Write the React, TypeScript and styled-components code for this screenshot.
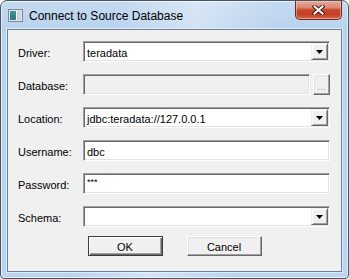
import React from 'react';
import styled, { createGlobalStyle } from 'styled-components';

type Row =
  | { kind: 'combo'; label: string; value: string }
  | { kind: 'text'; label: string; value: string; masked?: boolean }
  | { kind: 'browse'; label: string };

const rows: Row[] = [
  { kind: 'combo', label: 'Driver:', value: 'teradata' },
  { kind: 'browse', label: 'Database:' },
  { kind: 'combo', label: 'Location:', value: 'jdbc:teradata://127.0.0.1' },
  { kind: 'text', label: 'Username:', value: 'dbc' },
  { kind: 'text', label: 'Password:', value: '***', masked: true },
  { kind: 'combo', label: 'Schema:', value: '' },
];

export default function App(): JSX.Element {
  return (
    <>
      <GlobalStyle />
      <Window>
        <TitleBar>
          <AppIcon />
          <Title>Connect to Source Database</Title>
          <CloseButton aria-label="Close">
            <svg width="13" height="10" viewBox="0 0 13 10">
              <path d="M2.5 1.5 L10.5 8.5 M10.5 1.5 L2.5 8.5" stroke="#4a1d16" strokeWidth="4" strokeLinecap="square" />
              <path d="M2.5 1.5 L10.5 8.5 M10.5 1.5 L2.5 8.5" stroke="#ffffff" strokeWidth="2" strokeLinecap="square" />
            </svg>
          </CloseButton>
        </TitleBar>
        <Client>
          <FormGrid>
            {rows.map((row) => (
              <React.Fragment key={row.label}>
                <Label>{row.label}</Label>
                {row.kind === 'combo' && (
                  <Field>
                    <Value>{row.value}</Value>
                    <DropButton>
                      <svg width="7" height="4" viewBox="0 0 7 4">
                        <polygon points="0,0 7,0 3.5,4" fill="#000" />
                      </svg>
                    </DropButton>
                  </Field>
                )}
                {row.kind === 'text' && (
                  <Field>
                    {row.masked ? <Masked>{row.value}</Masked> : <Value>{row.value}</Value>}
                  </Field>
                )}
                {row.kind === 'browse' && (
                  <BrowseRow>
                    <Field $disabled />
                    <EllipsisButton disabled>...</EllipsisButton>
                  </BrowseRow>
                )}
              </React.Fragment>
            ))}
          </FormGrid>
          <ButtonRow>
            <PushButton $default>OK</PushButton>
            <PushButton>Cancel</PushButton>
          </ButtonRow>
        </Client>
      </Window>
    </>
  );
}

function AppIcon() {
  return (
    <IconBox>
      <svg width="15" height="13" viewBox="0 0 15 13">
        <defs>
          <linearGradient id="pane" x1="0" y1="0" x2="0" y2="1">
            <stop offset="0" stopColor="#4f8fa8" />
            <stop offset="0.5" stopColor="#2f8a6e" />
            <stop offset="1" stopColor="#3d6f9c" />
          </linearGradient>
        </defs>
        <rect x="0.5" y="0.5" width="14" height="12" fill="#dfe6ee" stroke="#7d8794" />
        <rect x="2" y="2" width="6" height="9" fill="url(#pane)" />
        <rect x="9" y="2" width="4" height="9" fill="#c8d4e2" />
        <rect x="8" y="2" width="1" height="9" fill="#ffffff" />
      </svg>
    </IconBox>
  );
}

const GlobalStyle = createGlobalStyle`
  html, body {
    margin: 0;
    padding: 0;
    background: #ffffff;
  }
  body {
    font-family: "Liberation Sans", Arial, sans-serif;
  }
`;

const Window = styled.div`
  box-sizing: border-box;
  width: 349px;
  height: 279px;
  display: flex;
  flex-direction: column;
  padding: 0 6px 6px;
  border: 1px solid #4b5461;
  border-radius: 7px 7px 4px 4px;
  background: linear-gradient(
      100deg,
      rgba(255, 255, 255, 0) 30%,
      rgba(255, 255, 255, 0.35) 50%,
      rgba(255, 255, 255, 0) 70%
    ),
    linear-gradient(to bottom, #c4daf1 0%, #b9d3ee 30px, #bad5f1 100%);
  box-shadow: inset 0 0 0 1px rgba(255, 255, 255, 0.6);
`;

const TitleBar = styled.div`
  height: 28px;
  display: flex;
  align-items: flex-start;
  flex-shrink: 0;
`;

const IconBox = styled.span`
  display: flex;
  margin: 8px 0 0 1px;
`;

const Title = styled.span`
  flex: 1;
  margin: 8px 0 0 6px;
  font-size: 12px;
  line-height: 14px;
  color: #000;
`;

const CloseButton = styled.button`
  box-sizing: border-box;
  width: 47px;
  height: 19px;
  padding: 0 0 1px;
  display: flex;
  align-items: center;
  justify-content: center;
  border: 1px solid #6b2a20;
  border-top: none;
  border-radius: 0 0 5px 5px;
  background: linear-gradient(
    to bottom,
    #e9a899 0%,
    #d98b78 35%,
    #c8462c 50%,
    #c24026 75%,
    #d86a4c 100%
  );
  box-shadow: inset 0 0 0 1px rgba(255, 220, 210, 0.45);
`;

const Client = styled.div`
  flex: 1;
  display: flex;
  flex-direction: column;
  padding: 11px 11px 0 10px;
  border: 1px solid #6f8196;
  background: #f0f0f0;
  box-shadow: 0 0 0 1px rgba(255, 255, 255, 0.5);
`;

const FormGrid = styled.div`
  display: grid;
  grid-template-columns: 65px 247px;
  grid-auto-rows: 21px;
  row-gap: 12px;
  align-items: center;
`;

const Label = styled.span`
  font-size: 11px;
  color: #000;
  padding-top: 2px;
`;

const Field = styled.div<{ $disabled?: boolean }>`
  box-sizing: border-box;
  flex: 1;
  height: 21px;
  display: flex;
  align-items: center;
  padding: 1px 0 0 1px;
  border: 1px solid;
  border-color: #a0a0a0 #ffffff #ffffff #a0a0a0;
  box-shadow: inset 1px 1px 0 #696969, inset -1px -1px 0 #e3e3e3;
  background: ${(props) => (props.$disabled ? '#f0f0f0' : '#ffffff')};
`;

const Value = styled.span`
  flex: 1;
  padding: 2px 0 0 2px;
  font-size: 11px;
  color: #000;
  white-space: nowrap;
`;

const Masked = styled.span`
  flex: 1;
  align-self: flex-start;
  padding: 3px 0 0 2px;
  font-size: 9px;
  line-height: 9px;
  color: #000;
`;

const DropButton = styled.span`
  box-sizing: border-box;
  width: 17px;
  height: 17px;
  margin: -1px 1px 0 0;
  display: flex;
  align-items: center;
  justify-content: center;
  border: 1px solid;
  border-color: #f0f0f0 #696969 #696969 #f0f0f0;
  box-shadow: inset 1px 1px 0 #ffffff, inset -1px -1px 0 #a0a0a0;
  background: #f0f0f0;
`;

const BrowseRow = styled.div`
  display: flex;
  gap: 3px;
`;

const EllipsisButton = styled.button`
  box-sizing: border-box;
  width: 17px;
  height: 21px;
  padding: 4px 0 0;
  border: 1px solid;
  border-color: #ffffff #696969 #696969 #ffffff;
  box-shadow: inset -1px -1px 0 #a0a0a0, inset 1px 1px 0 #e3e3e3;
  background: #f0f0f0;
  font-family: inherit;
  font-size: 11px;
  color: #a0a0a0;
  line-height: 11px;
`;

const ButtonRow = styled.div`
  display: flex;
  justify-content: center;
  gap: 24px;
  margin-top: 9px;
  padding-left: 1px;
`;

const PushButton = styled.button<{ $default?: boolean }>`
  box-sizing: border-box;
  width: 75px;
  height: 20px;
  padding: 1px 0 0;
  border: 1px solid;
  border-color: ${(props) =>
    props.$default ? '#3c3c3c' : '#ffffff #696969 #696969 #ffffff'};
  box-shadow: ${(props) =>
    props.$default
      ? 'inset 1px 1px 0 #ffffff, inset -1px -1px 0 #696969, inset -2px -2px 0 #a0a0a0'
      : 'inset -1px -1px 0 #a0a0a0, inset 1px 1px 0 #e3e3e3'};
  background: #f0f0f0;
  font-family: inherit;
  font-size: 11px;
  color: #000;
`;
